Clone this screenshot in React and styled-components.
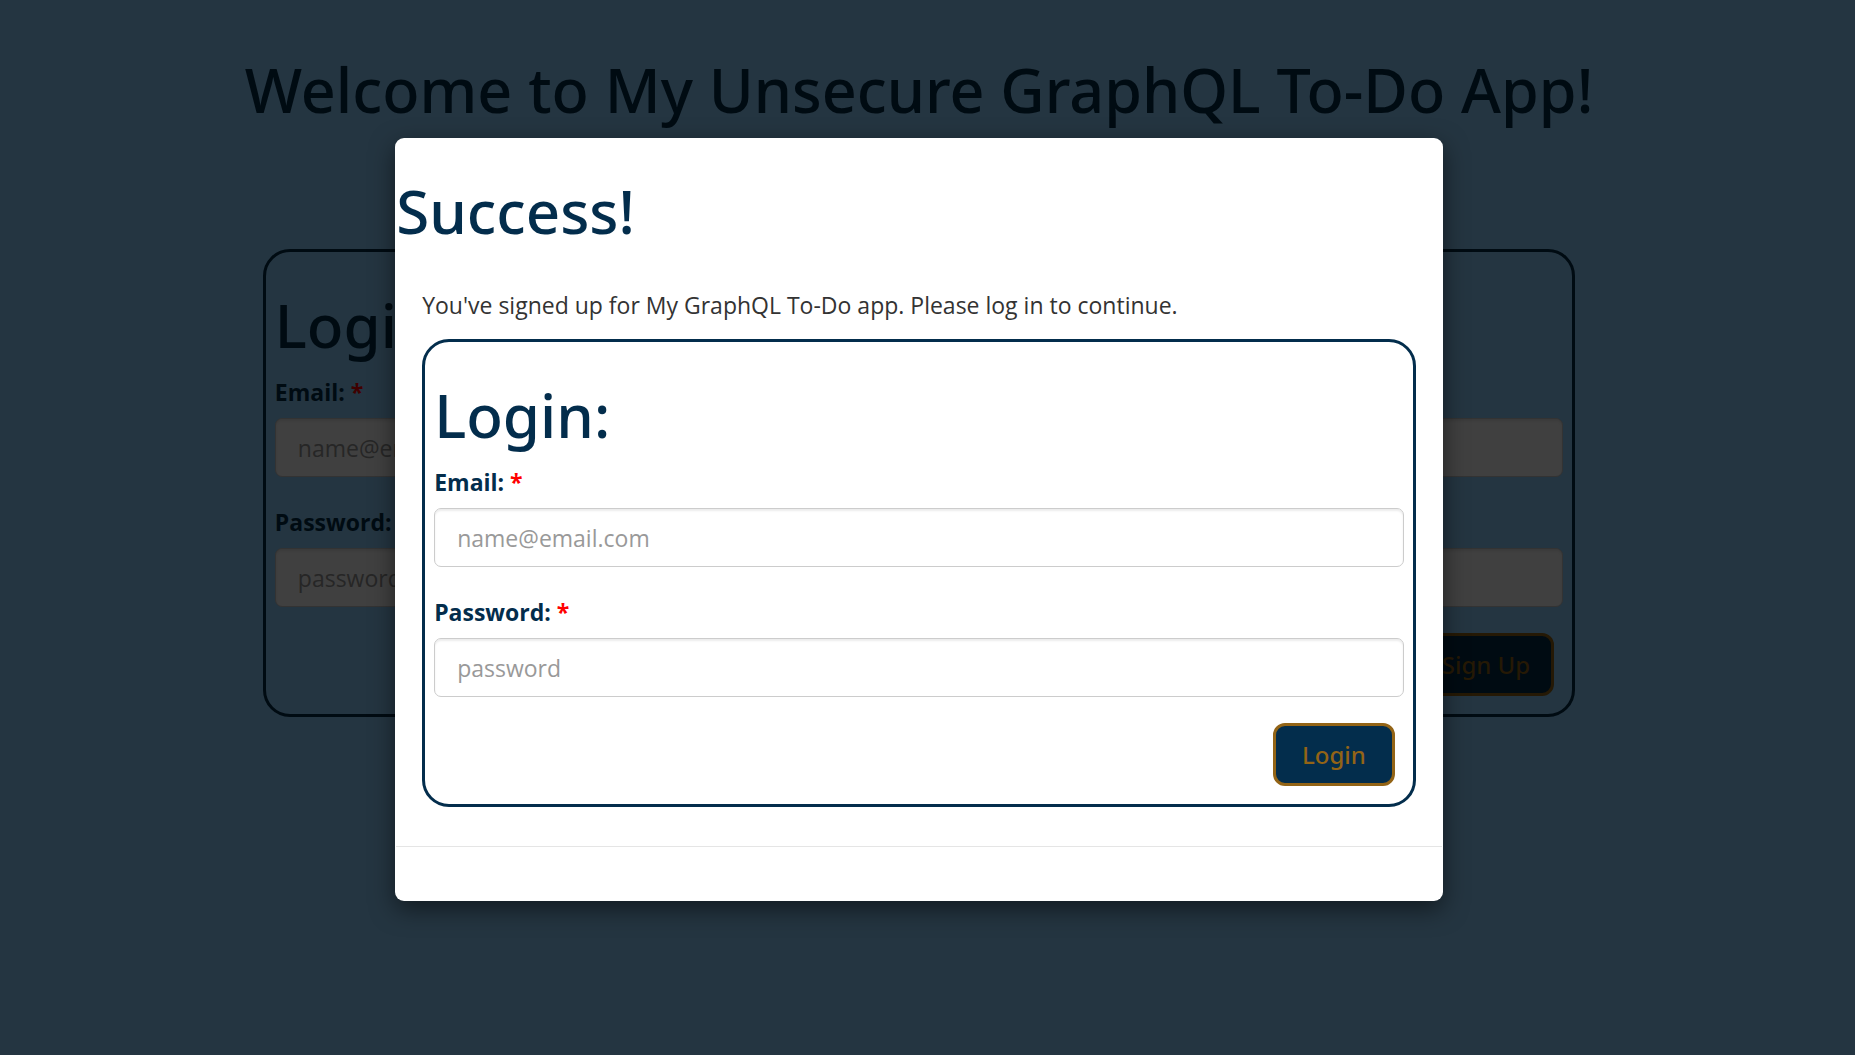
import React from "react";
import styled, { createGlobalStyle } from "styled-components";

const GlobalStyle = createGlobalStyle`
  *, *::before, *::after { box-sizing: border-box; }
  body {
    margin: 0;
    background: #243541;
    font-family: "Segoe UI", "Open Sans", "Noto Sans", sans-serif;
    font-size: 23px;
    line-height: 34px;
    color: #333333;
  }
`;

const Page = styled.div`
  min-height: 100vh;
  background: #243541;
  padding: 50px 17px 0 0;
`;

const Title = styled.h1`
  margin: 0 0 4px;
  font-family: "Segoe UI", "Noto Sans", sans-serif;
  font-size: ${(p) => (p.$centered ? "61px" : "60px")};
  font-weight: 500;
  line-height: 80px;
  text-align: ${(p) => (p.$centered ? "center" : "left")};
  color: ${(p) => (p.$dim ? "#000b12" : "#032d4c")};
`;

const Columns = styled.main`
  width: 71.4%;
  margin: 119px auto 0;
`;

const Card = styled.form`
  display: flex;
  flex-direction: column;
  border: 3px solid ${(p) => (p.$dim ? "#000b12" : "#032d4c")};
  border-radius: 27px;
  padding: 33px 9px 18px;
`;

const Label = styled.label`
  margin: 6px 0 9px;
  font-weight: 700;
  line-height: 34px;
  color: ${(p) => (p.$dim ? "#000b12" : "#032d4c")};
`;

const Star = styled.span`
  color: ${(p) => (p.$dim ? "#400000" : "#ff0000")};
`;

const Input = styled.input`
  width: 100%;
  height: 59px;
  margin-bottom: 22px;
  padding: 0 22px;
  border: 1px solid ${(p) => (p.$dim ? "#333333" : "#cccccc")};
  border-radius: 7px;
  background: ${(p) => (p.$dim ? "#404040" : "#ffffff")};
  box-shadow: inset 0 2px 2px rgba(0, 0, 0, 0.075);
  font: inherit;
  color: inherit;
  &::placeholder {
    color: ${(p) => (p.$dim ? "#262626" : "#999999")};
    opacity: 1;
  }
`;

const Button = styled.button`
  align-self: flex-end;
  height: 63px;
  margin: 4px 9px 0 0;
  padding: 0 ${(p) => (p.$dim ? "21px" : "26px")};
  border: 3px solid ${(p) => (p.$dim ? "#251905" : "#936416")};
  border-radius: 12px;
  background: ${(p) => (p.$dim ? "#000b12" : "#032d4c")};
  color: ${(p) => (p.$dim ? "#251905" : "#936416")};
  font-family: "Segoe UI", "Noto Sans", sans-serif;
  font-size: 24px;
  line-height: 34px;
  font-weight: 500;
`;

const Overlay = styled.div`
  position: absolute;
  inset: 0;
  padding: 138px 17px 0 0;
`;

const Dialog = styled.section`
  width: 57%;
  margin: 0 auto;
  border-radius: 9px;
  background: #ffffff;
  box-shadow: 0 8px 24px rgba(0, 0, 0, 0.5);
`;

const DialogHead = styled.header`
  display: flow-root;
  padding: 33px 1px 0;
`;

const DialogBody = styled.div`
  padding: 33px 27px 39px;
`;

const Message = styled.p`
  margin: 0 0 17px;
`;

const DialogFoot = styled.footer`
  height: 55px;
  margin: 0 1px;
  border-top: 1px solid #e5e5e5;
`;

function AuthForm({ id, dim, action }) {
  return (
    <Card $dim={dim} onSubmit={(e) => e.preventDefault()}>
      <Title as="h2" $dim={dim}>Login:</Title>
      <Label htmlFor={`${id}-email`} $dim={dim}>
        Email: <Star $dim={dim}>*</Star>
      </Label>
      <Input id={`${id}-email`} type="email" placeholder="name@email.com" $dim={dim} />
      <Label htmlFor={`${id}-password`} $dim={dim}>
        Password: <Star $dim={dim}>*</Star>
      </Label>
      <Input id={`${id}-password`} type="password" placeholder="password" $dim={dim} />
      <Button type="submit" $dim={dim}>{action}</Button>
    </Card>
  );
}

export default function App() {
  return (
    <>
      <GlobalStyle />
      <Page>
        <Title $centered $dim>Welcome to My Unsecure GraphQL To-Do App!</Title>
        <Columns>
          <AuthForm id="page" dim action="Sign Up" />
        </Columns>
      </Page>
      <Overlay>
        <Dialog role="dialog" aria-modal="true" aria-labelledby="dialog-title">
          <DialogHead>
            <Title as="h2" id="dialog-title">Success!</Title>
          </DialogHead>
          <DialogBody>
            <Message>You've signed up for My GraphQL To-Do app. Please log in to continue.</Message>
            <AuthForm id="dialog" action="Login" />
          </DialogBody>
          <DialogFoot />
        </Dialog>
      </Overlay>
    </>
  );
}
